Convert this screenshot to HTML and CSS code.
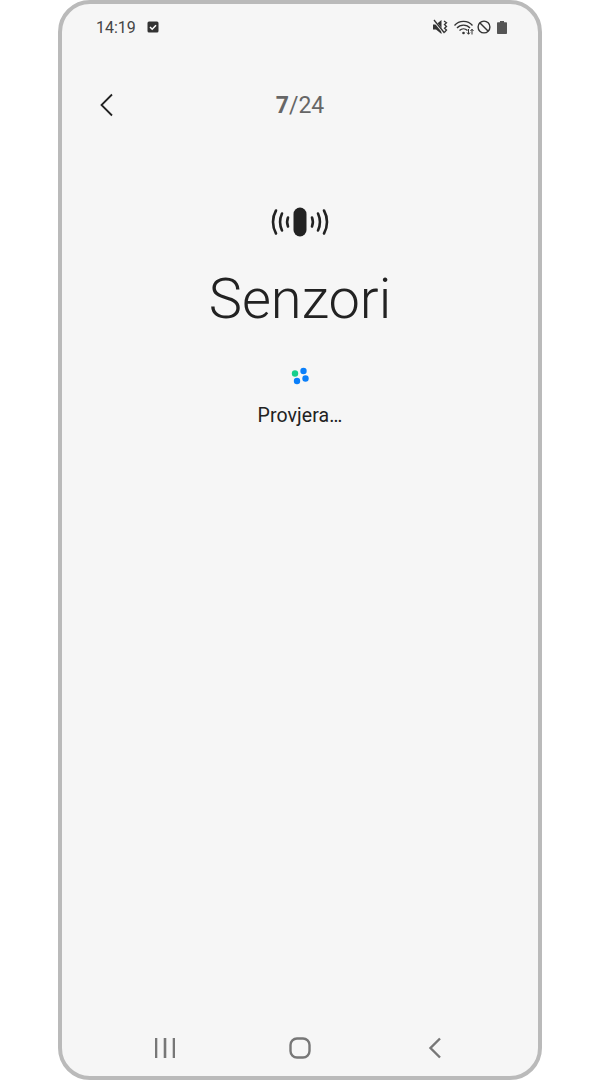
FILE: index.html
```html
<!DOCTYPE html>
<html lang="en">
<head>
    <meta charset="UTF-8">
    <title>Senzori</title>
    <link rel="stylesheet" href="styles.css">
</head>
<body>
    <div class="phone">
        <div class="status-bar">
            <div class="status-left">
                <span class="status-time">14:19</span>
                <svg class="icon-check" width="12" height="12" viewBox="0 0 12 12">
                    <rect x="0.5" y="0.5" width="11" height="11" rx="1.5" fill="#333"/>
                    <path d="M3 6l2.200 2.200L9 4.200" fill="none" stroke="#fff" stroke-width="1.500"/>
                </svg>
            </div>
            <div class="status-right">
                <svg class="icon-mute" width="17" height="16" viewBox="0 0 17 16">
                    <path d="M1 5.500h3L9.500 1v14L4 10.500H1z" fill="#333"/>
                    <path d="M1.500 1l10.500 13" stroke="#f6f6f6" stroke-width="2.400"/>
                    <path d="M2 1l10.500 13" stroke="#333" stroke-width="1.300"/>
                    <path d="M12 2l2.500 1.800-2 1.800 2 1.800-2 1.800 2 1.800-2 2.200" fill="none" stroke="#333" stroke-width="1.300"/>
                </svg>
                <svg width="21" height="17" viewBox="0 0 21 17">
                    <path d="M0.500 6.500C5 1 14 1 18.500 6.500M3 9C6.200 5.200 12.800 5.200 16 9M5.500 11.500C7.800 9.200 11.200 9.200 13.500 11.500" fill="none" stroke="#333" stroke-width="1.300"/>
                    <circle cx="9.500" cy="14" r="1.300" fill="#333"/>
                    <path d="M14.500 10v5M13 13.500l1.500 1.800 1.500-1.800M18 15.500v-5M16.500 12l1.500-1.800 1.500 1.800" fill="none" stroke="#333" stroke-width="1"/>
                </svg>
                <svg width="14" height="14" viewBox="0 0 14 14">
                    <circle cx="7" cy="7" r="5.900" fill="none" stroke="#333" stroke-width="1.400"/>
                    <path d="M3 3l8 8" stroke="#333" stroke-width="1.400"/>
                </svg>
                <svg class="icon-battery" width="10" height="14" viewBox="0 0 10 14">
                    <path d="M3 1h4v1.300h2c.6 0 1 .4 1 1V13c0 .6-.4 1-1 1H1c-.6 0-1-.4-1-1V3.300c0-.6.4-1 1-1h2z" fill="#555"/>
                </svg>
            </div>
        </div>

        <div class="top-bar">
            <svg class="back-icon" width="13" height="24" viewBox="0 0 13 24">
                <path d="M12 1.500L1.500 12 12 22.500" fill="none" stroke="#222" stroke-width="1.800"/>
            </svg>
            <div class="step-count"><b>7</b>/24</div>
        </div>

        <div class="main-content">
            <svg class="sensor-icon" width="60" height="30" viewBox="0 0 60 30">
                <rect x="23.500" y="0.500" width="13" height="29" rx="6.500" fill="#222"/>
                <g fill="none" stroke="#222" stroke-width="2.600" stroke-linecap="round">
                    <path d="M18 10.500c-1.200 3-1.200 6 0 9M42 10.500c1.200 3 1.200 6 0 9"/>
                    <path d="M12 6.500c-2.500 5.500-2.500 11.500 0 17M48 6.500c2.500 5.500 2.500 11.500 0 17"/>
                    <path d="M6 3.500c-4 7-4 16 0 23M54 3.500c4 7 4 16 0 23"/>
                </g>
            </svg>
            <h1 class="title">Senzori</h1>
            <svg class="spinner" width="18" height="18" viewBox="0 0 18 18">
                <circle cx="4" cy="6.500" r="3.200" fill="#17cf8d"/>
                <circle cx="12.500" cy="4" r="3.200" fill="#0a7ffa"/>
                <circle cx="14.500" cy="11.500" r="3.200" fill="#0a7ffa"/>
                <circle cx="6" cy="14" r="3.200" fill="#0a7ffa"/>
            </svg>
            <p class="status-text">Provjera…</p>
        </div>

        <div class="nav-bar">
            <svg width="20" height="22" viewBox="0 0 20 22">
                <path d="M1 1v20M10 1v20M19 1v20" stroke="#777" stroke-width="2.600"/>
            </svg>
            <svg width="22" height="22" viewBox="0 0 22 22">
                <rect x="1.500" y="1.500" width="19" height="19" rx="6.500" fill="none" stroke="#777" stroke-width="2.400"/>
            </svg>
            <svg width="14" height="22" viewBox="0 0 14 22">
                <path d="M12 1.500L2.500 11 12 20.500" fill="none" stroke="#777" stroke-width="2.400"/>
            </svg>
        </div>
    </div>
</body>
</html>
```

FILE: styles.css
```css
body {
    margin: 0;
    background: #ffffff;
    font-family: Roboto, "Liberation Sans", sans-serif;
}

.phone {
    box-sizing: border-box;
    width: 484px;
    height: 1080px;
    margin: 0 auto;
    border: 4px solid #bababa;
    border-radius: 32px;
    background: #f6f6f6;
    display: flex;
    flex-direction: column;
}

.status-bar {
    display: flex;
    justify-content: space-between;
    align-items: center;
    height: 46px;
    padding: 0 31px 0 34px;
}

.status-left,
.status-right {
    display: flex;
    align-items: center;
}

.status-left {
    gap: 11px;
}

.status-right {
    gap: 2px;
}

.icon-mute {
    margin-right: 3px;
}

.icon-battery {
    margin-left: 4px;
}

.status-time {
    font-size: 16px;
    color: #444;
}

.top-bar {
    position: relative;
    display: flex;
    justify-content: center;
    align-items: center;
    height: 28px;
    margin-top: 41px;
}

.back-icon {
    position: absolute;
    left: 38px;
    top: 2px;
}

.step-count {
    font-size: 23px;
    color: #666;
}

.step-count b {
    font-weight: 700;
}

.main-content {
    flex: 1;
    display: flex;
    flex-direction: column;
    align-items: center;
    padding-top: 88px;
}

.title {
    margin: 28px 0 0;
    font-size: 56px;
    line-height: 68px;
    font-weight: 300;
    color: #222;
}

.spinner {
    margin-top: 34px;
}

.status-text {
    margin: 19px 0 0;
    font-size: 19.5px;
    line-height: 24px;
    letter-spacing: 0.1px;
    color: #222;
}

.nav-bar {
    display: grid;
    grid-template-columns: repeat(3, 135px);
    justify-content: center;
    justify-items: center;
    align-items: center;
    height: 56px;
}
```
